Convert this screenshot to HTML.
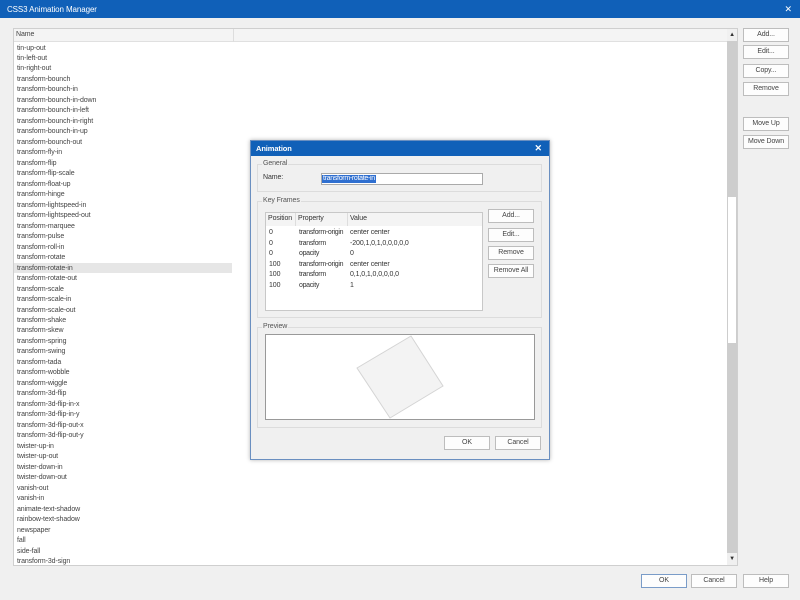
<!DOCTYPE html>
<html><head><style>
*{box-sizing:border-box;margin:0;padding:0}
body{width:800px;height:600px;position:relative;background:#f0f0f0;font-family:"Liberation Sans",sans-serif;font-size:7px;color:#333;overflow:hidden;letter-spacing:-0.1px}
.a{position:absolute;white-space:nowrap}
.btn{position:absolute;background:#fdfdfd;border:1px solid #bdbdbd;text-align:center;font-size:7px;color:#444;line-height:12px}
.grp{position:absolute;border:1px solid #dcdcdc}
.grp span{position:absolute;top:-5px;left:4px;background:#f0f0f0;padding:0 1px;color:#555}
.li{position:absolute;left:17px;font-size:7px;color:#444;line-height:10px;white-space:nowrap}
</style></head><body>
<div class="a" style="left:0;top:0;width:800px;height:18px;background:#1060b8;color:#fff;font-size:8px;line-height:19px;padding-left:7px">CSS3 Animation Manager<span style="position:absolute;right:8px;top:0;font-size:9px">✕</span></div>
<div class="a" style="left:13px;top:28px;width:725px;height:538px;background:#fff;border:1px solid #cfcfcf"></div>
<div class="a" style="left:14px;top:29px;width:713px;height:13px;background:#f4f4f4;border-bottom:1px solid #e0e0e0"></div>
<div class="a" style="left:233px;top:29px;width:1px;height:13px;background:#ddd"></div>
<div class="a" style="left:16px;top:31px;color:#444">Name</div>
<div class="a" style="left:727px;top:29px;width:10px;height:536px;background:#cdcdcd"></div>
<div class="a" style="left:727px;top:29px;width:10px;height:12px;background:#f0f0f0;font-size:6px;text-align:center;line-height:12px">▲</div>
<div class="a" style="left:727px;top:553px;width:10px;height:12px;background:#f0f0f0;font-size:6px;text-align:center;line-height:12px">▼</div>
<div class="a" style="left:727px;top:196px;width:10px;height:148px;background:#fff;border:1px solid #cdcdcd"></div>
<div class="a" style="left:14px;top:263px;width:218px;height:10px;background:#e6e6e6"></div>
<div id="list"></div>
<script>
var n=["tin-up-out","tin-left-out","tin-right-out","transform-bounch","transform-bounch-in","transform-bounch-in-down","transform-bounch-in-left","transform-bounch-in-right","transform-bounch-in-up","transform-bounch-out","transform-fly-in","transform-flip","transform-flip-scale","transform-float-up","transform-hinge","transform-lightspeed-in","transform-lightspeed-out","transform-marquee","transform-pulse","transform-roll-in","transform-rotate","transform-rotate-in","transform-rotate-out","transform-scale","transform-scale-in","transform-scale-out","transform-shake","transform-skew","transform-spring","transform-swing","transform-tada","transform-wobble","transform-wiggle","transform-3d-flip","transform-3d-flip-in-x","transform-3d-flip-in-y","transform-3d-flip-out-x","transform-3d-flip-out-y","twister-up-in","twister-up-out","twister-down-in","twister-down-out","vanish-out","vanish-in","animate-text-shadow","rainbow-text-shadow","newspaper","fall","side-fall","transform-3d-sign"];
var h="";n.forEach(function(t,i){h+='<div class="li" style="top:'+(43.5+i*10.48)+'px">'+t+'</div>'});document.getElementById("list").innerHTML=h;
</script>
<div class="btn" style="left:743px;top:28px;width:46px;height:14px">Add...</div>
<div class="btn" style="left:743px;top:45px;width:46px;height:14px">Edit...</div>
<div class="btn" style="left:743px;top:64px;width:46px;height:14px">Copy...</div>
<div class="btn" style="left:743px;top:82px;width:46px;height:14px">Remove</div>
<div class="btn" style="left:743px;top:117px;width:46px;height:14px">Move Up</div>
<div class="btn" style="left:743px;top:135px;width:46px;height:14px">Move Down</div>
<div class="btn" style="left:641px;top:574px;width:46px;height:14px;border-color:#7a9cc8">OK</div>
<div class="btn" style="left:691px;top:574px;width:46px;height:14px">Cancel</div>
<div class="btn" style="left:743px;top:574px;width:46px;height:14px">Help</div>

<div class="a" style="left:250px;top:140px;width:300px;height:320px;background:#f0f0f0;border:1px solid #6a8fc0;box-shadow:0 0 4px rgba(0,0,0,.3)">
<div class="a" style="left:0;top:0;width:298px;height:15px;background:#1060b8;color:#fff;font-weight:bold;font-size:7.5px;line-height:15px;padding-left:5px">Animation<span style="position:absolute;right:7px;font-size:9px">✕</span></div>
</div>
<div class="grp" style="left:257px;top:164px;width:285px;height:28px"><span>General</span></div>
<div class="a" style="left:263px;top:174px">Name:</div>
<div class="a" style="left:321px;top:173px;width:162px;height:12px;background:#fff;border:1px solid #aaa"></div>
<div class="a" style="left:322px;top:175px;height:8px;background:#2f6fd0;color:#fff;line-height:8px;padding:0 1px;letter-spacing:-0.3px">transform-rotate-in</div>
<div class="grp" style="left:257px;top:201px;width:285px;height:117px"><span>Key Frames</span></div>
<div class="a" style="left:265px;top:212px;width:218px;height:99px;background:#fff;border:1px solid #c8c8c8"></div>
<div class="a" style="left:266px;top:213px;width:216px;height:13px;background:#f4f4f4"></div>
<div class="a" style="left:295px;top:213px;width:1px;height:13px;background:#ddd"></div>
<div class="a" style="left:347px;top:213px;width:1px;height:13px;background:#ddd"></div>
<div class="a" style="left:268px;top:215px">Position</div>
<div class="a" style="left:298px;top:215px">Property</div>
<div class="a" style="left:350px;top:215px">Value</div>
<div class="a" style="left:269px;top:228px;line-height:10.5px">0<br>0<br>0<br>100<br>100<br>100</div>
<div class="a" style="left:299px;top:228px;line-height:10.5px;letter-spacing:-0.3px">transform-origin<br>transform<br>opacity<br>transform-origin<br>transform<br>opacity</div>
<div class="a" style="left:350px;top:228px;line-height:10.5px">center center<br>-200,1,0,1,0,0,0,0,0<br>0<br>center center<br>0,1,0,1,0,0,0,0,0<br>1</div>
<div class="btn" style="left:488px;top:209px;width:46px;height:14px">Add...</div>
<div class="btn" style="left:488px;top:228px;width:46px;height:14px">Edit...</div>
<div class="btn" style="left:488px;top:246px;width:46px;height:14px">Remove</div>
<div class="btn" style="left:488px;top:264px;width:46px;height:14px">Remove All</div>
<div class="grp" style="left:257px;top:327px;width:285px;height:101px"><span>Preview</span></div>
<div class="a" style="left:265px;top:334px;width:270px;height:86px;background:#fff;border:1px solid #999"></div>
<svg class="a" style="left:0;top:0" width="800" height="600"><polygon points="357,368 411,336 443,386 390,418" fill="#f3f3f3" stroke="#d4d4d4" stroke-width="1"/></svg>
<div class="btn" style="left:444px;top:436px;width:46px;height:14px">OK</div>
<div class="btn" style="left:495px;top:436px;width:46px;height:14px">Cancel</div>
</body></html>
